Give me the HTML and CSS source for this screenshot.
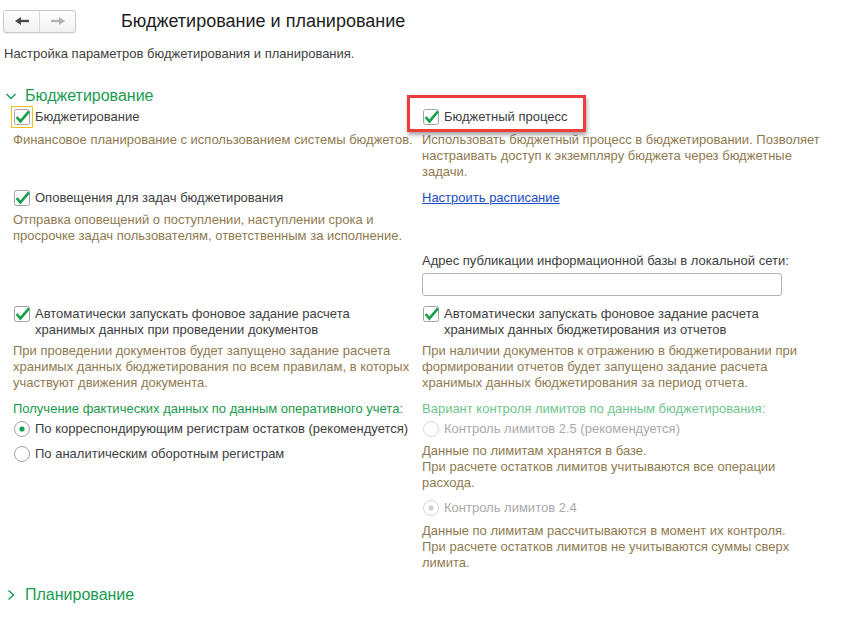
FILE: index.html
```html
<!DOCTYPE html>
<html lang="ru">

<head>
    <meta charset="utf-8">
    <title>Бюджетирование и планирование</title>
    <link rel="stylesheet" href="styles.css">
</head>

<body>
    <header class="topbar">
        <div class="nav">
            <span class="nav-btn">
                <svg width="14" height="10" viewBox="0 0 14 10"><path d="M0 5 L6 1 L6 9 Z" fill="#4a4a4a"/><rect x="5" y="3.8" width="9" height="2.4" fill="#4a4a4a"/></svg>
            </span>
            <span class="nav-btn">
                <svg width="14" height="10" viewBox="0 0 14 10"><path d="M14 5 L8 1 L8 9 Z" fill="#b3b3b3"/><rect x="0" y="3.8" width="9" height="2.4" fill="#b3b3b3"/></svg>
            </span>
        </div>
        <h1 class="title">Бюджетирование и планирование</h1>
    </header>

    <p class="intro">Настройка параметров бюджетирования и планирования.</p>

    <section class="group">
        <h2 class="group-head">
            <svg width="10" height="10" viewBox="0 0 10 10"><path d="M0.5 3 L5 7.5 L9.5 3" fill="none" stroke="#1a9b52" stroke-width="1.4"/></svg>
            Бюджетирование
        </h2>

        <div class="grid">
            <div class="cell">
                <label class="check">
                    <span class="box focused"><svg width="16" height="16" viewBox="0 0 16 16"><rect x="0.5" y="0.5" width="15" height="15" rx="2" fill="#fff" stroke="#a3a3a3"/><path d="M2.6 8 L6.4 12.4 L15 2.4" fill="none" stroke="#16a04c" stroke-width="2.6"/></svg></span>
                    <span>Бюджетирование</span>
                </label>
                <p class="note first-row">Финансовое планирование с использованием системы бюджетов.</p>
            </div>

            <div class="cell marked">
                <label class="check">
                    <span class="box"><svg width="16" height="16" viewBox="0 0 16 16"><rect x="0.5" y="0.5" width="15" height="15" rx="2" fill="#fff" stroke="#a3a3a3"/><path d="M2.6 8 L6.4 12.4 L15 2.4" fill="none" stroke="#16a04c" stroke-width="2.6"/></svg></span>
                    <span>Бюджетный процесс</span>
                </label>
                <p class="note first-row">Использовать бюджетный процесс в бюджетировании. Позволяет<br>настраивать доступ к экземпляру бюджета через бюджетные<br>задачи.</p>
                <div class="highlight"></div>
            </div>

            <div class="cell">
                <label class="check">
                    <span class="box"><svg width="16" height="16" viewBox="0 0 16 16"><rect x="0.5" y="0.5" width="15" height="15" rx="2" fill="#fff" stroke="#a3a3a3"/><path d="M2.6 8 L6.4 12.4 L15 2.4" fill="none" stroke="#16a04c" stroke-width="2.6"/></svg></span>
                    <span>Оповещения для задач бюджетирования</span>
                </label>
                <p class="note">Отправка оповещений о поступлении, наступлении срока и<br>просрочке задач пользователям, ответственным за исполнение.</p>
            </div>

            <div class="cell">
                <a class="link" href="#">Настроить расписание</a>
                <p class="field-label">Адрес публикации информационной базы в локальной сети:</p>
                <div class="field"></div>
            </div>

            <div class="cell">
                <label class="check">
                    <span class="box"><svg width="16" height="16" viewBox="0 0 16 16"><rect x="0.5" y="0.5" width="15" height="15" rx="2" fill="#fff" stroke="#a3a3a3"/><path d="M2.6 8 L6.4 12.4 L15 2.4" fill="none" stroke="#16a04c" stroke-width="2.6"/></svg></span>
                    <span>Автоматически запускать фоновое задание расчета<br>хранимых данных при проведении документов</span>
                </label>
                <p class="note tight">При проведении документов будет запущено задание расчета<br>хранимых данных бюджетирования по всем правилам, в которых<br>участвуют движения документа.</p>
            </div>

            <div class="cell">
                <label class="check">
                    <span class="box"><svg width="16" height="16" viewBox="0 0 16 16"><rect x="0.5" y="0.5" width="15" height="15" rx="2" fill="#fff" stroke="#a3a3a3"/><path d="M2.6 8 L6.4 12.4 L15 2.4" fill="none" stroke="#16a04c" stroke-width="2.6"/></svg></span>
                    <span>Автоматически запускать фоновое задание расчета<br>хранимых данных бюджетирования из отчетов</span>
                </label>
                <p class="note tight">При наличии документов к отражению в бюджетировании при<br>формировании отчетов будет запущено задание расчета<br>хранимых данных бюджетирования за период отчета.</p>
            </div>

            <div class="cell">
                <p class="radio-title">Получение фактических данных по данным оперативного учета:</p>
                <label class="radio first">
                    <svg width="16" height="16" viewBox="0 0 16 16"><circle cx="8" cy="8" r="7.5" fill="#fff" stroke="#a3a3a3"/><circle cx="8" cy="8" r="2.6" fill="#16a04c"/></svg>
                    <span>По корреспондирующим регистрам остатков (рекомендуется)</span>
                </label>
                <label class="radio">
                    <svg width="16" height="16" viewBox="0 0 16 16"><circle cx="8" cy="8" r="7.5" fill="#fff" stroke="#a3a3a3"/></svg>
                    <span>По аналитическим оборотным регистрам</span>
                </label>
            </div>

            <div class="cell">
                <p class="radio-title disabled">Вариант контроля лимитов по данным бюджетирования:</p>
                <label class="radio first disabled">
                    <svg width="16" height="16" viewBox="0 0 16 16"><circle cx="8" cy="8" r="7.5" fill="#fff" stroke="#d6d6d6"/></svg>
                    <span>Контроль лимитов 2.5 (рекомендуется)</span>
                </label>
                <p class="note plain">Данные по лимитам хранятся в базе.<br>При расчете остатков лимитов учитываются все операции<br>расхода.</p>
                <label class="radio disabled">
                    <svg width="16" height="16" viewBox="0 0 16 16"><circle cx="8" cy="8" r="7.5" fill="#fff" stroke="#d6d6d6"/><circle cx="8" cy="8" r="2.6" fill="#cfcfcf"/></svg>
                    <span>Контроль лимитов 2.4</span>
                </label>
                <p class="note plain last">Данные по лимитам рассчитываются в момент их контроля.<br>При расчете остатков лимитов не учитываются суммы сверх<br>лимита.</p>
            </div>
        </div>
    </section>

    <section class="group">
        <h2 class="group-head closed">
            <svg width="10" height="10" viewBox="0 0 10 10"><path d="M2.5 0.5 L7.5 5 L2.5 9.5" fill="none" stroke="#1a9b52" stroke-width="1.4"/></svg>
            Планирование
        </h2>
    </section>
</body>

</html>
```

FILE: styles.css
```css
html,
body {
    margin: 0;
    padding: 0;
    background: #fff;
}

body {
    font-family: "Liberation Sans", Arial, sans-serif;
    font-size: 13px;
    line-height: 16px;
    color: #404040;
}

p {
    margin: 0;
}

/* top bar */

.topbar {
    display: flex;
    align-items: center;
    padding: 9px 0 0 3px;
}

.nav {
    display: flex;
    width: 73px;
    height: 23px;
    box-sizing: border-box;
    border: 1px solid #c9c9c9;
    border-radius: 3px;
    background: linear-gradient(#ffffff, #f1f1f1);
    box-shadow: 0 1px 1px rgba(0, 0, 0, 0.08);
}

.nav-btn {
    display: flex;
    justify-content: center;
    align-items: center;
    flex: 1;
}

.nav-btn + .nav-btn {
    border-left: 1px solid #dadada;
}

.title {
    margin: 1px 0 0 45px;
    font-size: 18px;
    font-weight: normal;
    line-height: 23px;
    color: #1e1e1e;
}

.intro {
    margin-top: 13px;
    padding-left: 4px;
}

/* groups */

.group-head {
    display: flex;
    align-items: center;
    gap: 9px;
    margin: 24px 0 0;
    padding-left: 6px;
    font-size: 16px;
    font-weight: normal;
    line-height: 20px;
    color: #1a9b52;
}

.group-head.closed {
    margin-top: 14px;
}

.grid {
    display: grid;
    grid-template-columns: 397px 1fr;
    column-gap: 12px;
    row-gap: 10px;
    margin-top: 3px;
    padding-left: 13px;
}

.cell {
    position: relative;
}

/* checkboxes */

.check,
.radio {
    display: flex;
    align-items: flex-start;
    gap: 5px;
}

.check .box,
.radio svg {
    flex: none;
    display: block;
    width: 16px;
    height: 16px;
    margin-left: 1px;
}

.box svg {
    display: block;
}

.box.focused {
    outline: 1px solid #f2c21b;
    outline-offset: 2px;
}

.note {
    margin-top: 6px;
    color: #8f7a50;
    white-space: nowrap;
}

.note.first-row {
    margin-top: 7px;
}

.note.tight {
    margin-top: 5px;
}

.link {
    display: inline-block;
    color: #1c4cc3;
    text-decoration: underline;
}

.field-label {
    margin-top: 47px;
}

.field {
    width: 360px;
    height: 23px;
    box-sizing: border-box;
    margin-top: 4px;
    border: 1px solid #b4b4b4;
    border-radius: 3px;
    background: #fff;
}

/* radio groups */

.radio-title {
    color: #1a9a4c;
}

.radio-title.disabled {
    color: #6fc58f;
}

.radio {
    margin-top: 9px;
}

.radio.first {
    margin-top: 4px;
}

.radio.disabled {
    color: #a9a9a9;
}

.note.plain {
    margin-top: 6px;
}

.note.last {
    margin-top: 7px;
}

/* red annotation frame */

.highlight {
    position: absolute;
    left: -15px;
    top: -14px;
    width: 179px;
    height: 37px;
    box-sizing: border-box;
    border: 3px solid #ee3d3d;
    box-shadow: 1px 3px 4px rgba(0, 0, 0, 0.35);
    pointer-events: none;
}
```
